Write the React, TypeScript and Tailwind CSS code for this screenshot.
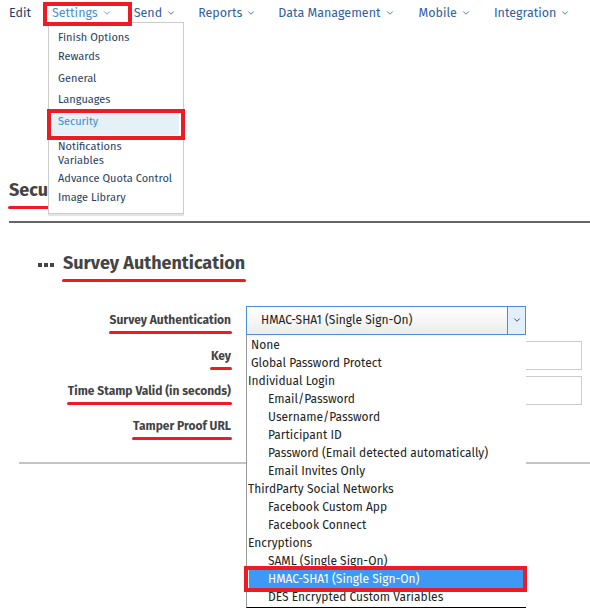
import { ChevronDown } from 'lucide-react';

const navItems = [
    { label: 'Settings', active: true, gap: 'mr-[22px]' },
    { label: 'Send', gap: 'mr-[22px]' },
    { label: 'Reports', gap: 'mr-[22px]' },
    { label: 'Data Management', gap: 'mr-[24px]' },
    { label: 'Mobile', gap: 'mr-[23px]' },
    { label: 'Integration', gap: 'mr-[22px]' },
];

// row height + top gap for each menu entry, tuned to the screenshot
const settingsMenu = [
    { label: 'Finish Options', cls: 'h-[18px]' },
    { label: 'Rewards', cls: 'h-[20px]' },
    { label: 'General', cls: 'h-[24px]' },
    { label: 'Languages', cls: 'h-[18px]' },
    { label: 'Security', cls: 'h-[27px]', selected: true },
    { label: 'Notifications', cls: 'h-[14px] mt-[4px]' },
    { label: 'Variables', cls: 'h-[14px]' },
    { label: 'Advance Quota Control', cls: 'h-[18px] mt-[2px]' },
    { label: 'Image Library', cls: 'h-[18px] mt-[1px]' },
];

// indent: 0 = optgroup label, 1 = top-level option, 2 = option inside group
const authOptions = [
    { label: 'None', indent: 1 },
    { label: 'Global Password Protect', indent: 1 },
    { label: 'Individual Login', indent: 0 },
    { label: 'Email/Password', indent: 2 },
    { label: 'Username/Password', indent: 2 },
    { label: 'Participant ID', indent: 2 },
    { label: 'Password (Email detected automatically)', indent: 2 },
    { label: 'Email Invites Only', indent: 2 },
    { label: 'ThirdParty Social Networks', indent: 0 },
    { label: 'Facebook Custom App', indent: 2 },
    { label: 'Facebook Connect', indent: 2 },
    { label: 'Encryptions', indent: 0 },
    { label: 'SAML (Single Sign-On)', indent: 2 },
    { label: 'HMAC-SHA1 (Single Sign-On)', indent: 2, selected: true },
    { label: 'DES Encrypted Custom Variables', indent: 2 },
];

function Marked({ children, className = '' }: { children: React.ReactNode; className?: string }) {
    // red annotation underline
    return (
        <span className={`relative inline-block ${className}`}>
            {children}
            <span className="absolute left-[-1px] right-[-1px] bottom-[-5px] h-[3px] rounded-full bg-[#ed1c24]" />
        </span>
    );
}

function FormRow({ label, children, h }: { label: string; children?: React.ReactNode; h: string }) {
    return (
        <div className={`flex items-center ${h}`}>
            <div className="w-[231px] text-right text-[12px] font-bold text-[#444]">
                <Marked>{label}</Marked>
            </div>
            <div className="ml-[15px]">{children}</div>
        </div>
    );
}

export default function App() {
    return (
        <div className="relative w-[590px] h-[614px] overflow-hidden bg-white font-['Fira_Sans','Open_Sans',sans-serif]">
            {/* Top Nav */}
            <nav className="flex items-center h-[26px] pl-[9px] text-[12.5px] whitespace-nowrap">
                <span className="text-[#1d3c6e] mr-[21px]">Edit</span>
                {navItems.map((item) => (
                    <span
                        key={item.label}
                        className={`flex items-center gap-[4px] ${item.gap} ${item.active ? 'text-[#4a8fd4]' : 'text-[#30609f]'}`}
                    >
                        {item.label}
                        <ChevronDown className="size-[10px]" strokeWidth={2} />
                    </span>
                ))}
            </nav>

            {/* Page content behind the menu */}
            <div className="h-[150px]" />
            <h2 className="pl-[9px] text-[18px] font-bold text-[#444] leading-[28px]">
                <Marked>Security</Marked>
            </h2>
            <div className="mt-[17px] ml-[9px] h-[2px] bg-[#666]" />

            {/* Survey Authentication section */}
            <div className="flex items-center gap-[9px] pl-[38px] mt-[27px] h-[28px]">
                <span className="flex gap-[2px] mt-[1px]">
                    <span className="size-[4px] bg-[#444]" />
                    <span className="size-[4px] bg-[#444]" />
                    <span className="size-[4px] bg-[#444]" />
                </span>
                <h3 className="text-[18px] font-bold text-[#444] -mt-[2px]">
                    <Marked>Survey Authentication</Marked>
                </h3>
            </div>

            <div className="mt-[24px]">
                <FormRow label="Survey Authentication" h="h-[36px]">
                    <div className="flex w-[280px] h-[29px] border border-[#4a90d9] bg-gradient-to-b from-white to-[#ececec]">
                        <span className="flex-1 pl-[14px] flex items-center text-[12px] text-[#222]">
                            HMAC-SHA1 (Single Sign-On)
                        </span>
                        <span className="w-[18px] flex items-center justify-center bg-[#e3effa] border-l border-[#4a90d9]">
                            <ChevronDown className="size-[10px] text-[#333]" strokeWidth={2} />
                        </span>
                    </div>
                </FormRow>
                <FormRow label="Key" h="h-[35px]">
                    <div className="w-[336px] h-[29px] border border-[#ccc] bg-white" />
                </FormRow>
                <FormRow label="Time Stamp Valid (in seconds)" h="h-[35px]">
                    <div className="w-[336px] h-[29px] border border-[#ccc] bg-white" />
                </FormRow>
                <FormRow label="Tamper Proof URL" h="h-[35px]" />
            </div>
            <div className="mt-[19px] ml-[19px] h-[2px] bg-[#c4c4c4]" />

            {/* Settings dropdown menu */}
            <div className="absolute left-[48px] top-[22px] w-[136px] h-[192px] border border-[#ccc] bg-white pt-[6px] shadow-[0_2px_0_#e4e4e4]">
                {settingsMenu.map((m) =>
                    m.selected ? (
                        <div key={m.label} className={`${m.cls} pt-[4px] px-[4px]`}>
                            <div className="h-[22px] pl-[5px] pb-[3px] flex items-center bg-[#e6f0f7] text-[11px] text-[#3a8fd0]">
                                {m.label}
                            </div>
                        </div>
                    ) : (
                        <div
                            key={m.label}
                            className={`flex items-center pl-[9px] text-[11px] text-[#2a3e5c] ${m.cls}`}
                        >
                            {m.label}
                        </div>
                    ),
                )}
            </div>

            {/* Open select list */}
            <div className="absolute left-[246px] top-[335px] w-[280px] border-l border-l-[#999] border-b border-b-black bg-white pb-[1px] pt-[1px] pr-[1px]">
                {authOptions.map((o) => (
                    <div
                        key={o.label}
                        className={`h-[18px] flex items-center text-[12px] whitespace-nowrap ${o.selected ? 'mx-[2px] pl-[19px] bg-[#3d99f5] text-white' : o.indent === 0 ? 'pl-[1px] text-[#222]' : o.indent === 1 ? 'pl-[4px] text-[#222]' : 'pl-[21px] text-[#222]'}`}
                    >
                        {o.label}
                    </div>
                ))}
            </div>

            {/* Red annotation boxes */}
            <div className="absolute left-[43px] top-[2px] w-[89px] h-[24px] border-[4px] border-[#ed1c24]" />
            <div className="absolute left-[47px] top-[109px] w-[138px] h-[31px] border-[4px] border-[#ed1c24]" />
            <div className="absolute left-[244px] top-[566px] w-[283px] h-[26px] border-[4px] border-[#ed1c24]" />
        </div>
    );
}
